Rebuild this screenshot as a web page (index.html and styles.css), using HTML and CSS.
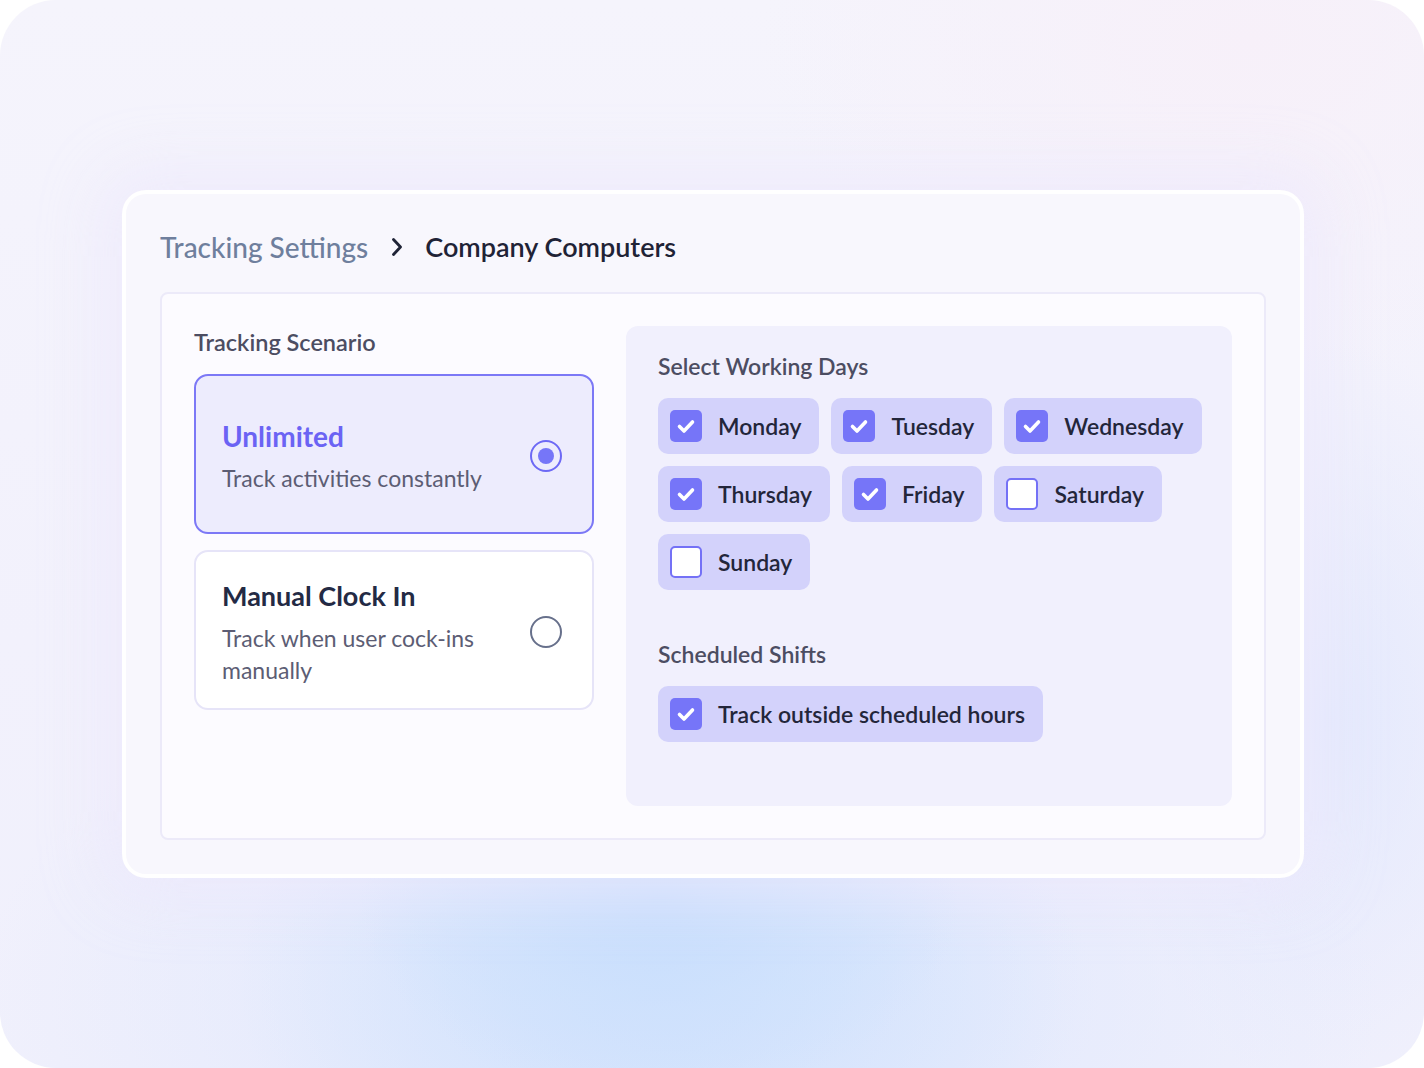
FILE: index.html
```html
<!DOCTYPE html>
<html lang="en">
<head>
<meta charset="utf-8">
<title>Tracking Settings</title>
<link rel="stylesheet" href="styles.css">
</head>
<body>
<div class="frame">
  <section class="card">
    <nav class="crumbs">
      <span class="crumb-parent">Tracking Settings</span>
      <svg class="crumb-sep" width="14" height="20" viewBox="0 0 14 20"><path d="M3.5 2.5 L10.5 10 L3.5 17.5" fill="none" stroke="#1f2336" stroke-width="2.8" stroke-linecap="round" stroke-linejoin="round"/></svg>
      <span class="crumb-current">Company Computers</span>
    </nav>

    <div class="panel">
      <div class="scenario">
        <h3 class="label">Tracking Scenario</h3>
        <label class="option option-active">
          <div class="option-text">
            <div class="option-title">Unlimited</div>
            <div class="option-desc">Track activities constantly</div>
          </div>
          <span class="radio radio-on"></span>
        </label>
        <label class="option">
          <div class="option-text">
            <div class="option-title">Manual Clock In</div>
            <div class="option-desc">Track when user cock-ins manually</div>
          </div>
          <span class="radio"></span>
        </label>
      </div>

      <div class="days">
        <h3 class="label">Select Working Days</h3>
        <div class="chips">
          <span class="chip"><span class="box on"><svg viewBox="0 0 32 32"><path d="M9.5 16.5 L14 21 L22.5 12" /></svg></span>Monday</span>
          <span class="chip"><span class="box on"><svg viewBox="0 0 32 32"><path d="M9.5 16.5 L14 21 L22.5 12" /></svg></span>Tuesday</span>
          <span class="chip"><span class="box on"><svg viewBox="0 0 32 32"><path d="M9.5 16.5 L14 21 L22.5 12" /></svg></span>Wednesday</span>
          <span class="chip"><span class="box on"><svg viewBox="0 0 32 32"><path d="M9.5 16.5 L14 21 L22.5 12" /></svg></span>Thursday</span>
          <span class="chip"><span class="box on"><svg viewBox="0 0 32 32"><path d="M9.5 16.5 L14 21 L22.5 12" /></svg></span>Friday</span>
          <span class="chip"><span class="box"></span>Saturday</span>
          <span class="chip"><span class="box"></span>Sunday</span>
        </div>

        <h3 class="label label-shifts">Scheduled Shifts</h3>
        <div class="chips">
          <span class="chip"><span class="box on"><svg viewBox="0 0 32 32"><path d="M9.5 16.5 L14 21 L22.5 12" /></svg></span>Track outside scheduled hours</span>
        </div>
      </div>
    </div>
  </section>
</div>
</body>
</html>
```

FILE: styles.css
```css
* { box-sizing: border-box; }

html, body {
  margin: 0;
  padding: 0;
  background: #ffffff;
}

body {
  font-family: "Lato", "Noto Sans", sans-serif;
  color: #23263a;
}

/* rounded backdrop with a soft blue glow under the card */
.frame {
  width: 1424px;
  height: 1068px;
  border-radius: 56px;
  overflow: hidden;
  padding: 190px 120px 0 122px;
  background:
    radial-gradient(ellipse 300px 200px at 660px 900px, rgba(200, 222, 253, 1) 0%, rgba(205, 225, 253, 0.6) 55%, rgba(214, 228, 253, 0) 100%),
    radial-gradient(ellipse 420px 300px at 660px 980px, rgba(206, 225, 253, 0.9) 0%, rgba(210, 227, 253, 0.5) 55%, rgba(214, 228, 253, 0) 100%),
    radial-gradient(ellipse 700px 380px at 680px 1000px, rgba(215, 228, 253, 0.9) 0%, rgba(222, 231, 253, 0.5) 55%, rgba(232, 236, 253, 0) 100%),
    radial-gradient(ellipse 220px 380px at 1330px 720px, rgba(226, 232, 253, 0.9) 0%, rgba(226, 232, 253, 0) 100%),
    radial-gradient(ellipse 700px 500px at 1250px 40px, rgba(247, 240, 249, 1) 0%, rgba(247, 240, 249, 0) 70%),
    linear-gradient(180deg, #f5f4fc 0%, #f2f1fc 60%, #f0f0fc 100%);
}

.card {
  width: 1182px;
  height: 688px;
  border: 4px solid rgba(255, 255, 255, 0.95);
  border-radius: 24px;
  background: #f8f7fd;
  padding: 34px;
  box-shadow: 0 0 60px 20px rgba(236, 232, 252, 0.7);
}

.crumbs {
  display: flex;
  align-items: center;
  height: 38px;
  line-height: 38px;
  margin-bottom: 26px;
  font-size: 27px;
  font-weight: 600;
}

.crumb-parent {
  color: #6f7f9d;
  font-size: 28px;
  font-weight: 500;
}

.crumb-sep {
  margin: 0 21px 0 22px;
}

.crumb-current {
  color: #1f2336;
}

.panel {
  display: flex;
  gap: 32px;
  height: 548px;
  padding: 32px;
  border: 2px solid #eceaf9;
  border-radius: 8px;
  background: #fcfbff;
}

.label {
  margin: 0;
  font-size: 23px;
  line-height: 32px;
  font-weight: 600;
  color: #4c4d62;
}

.scenario {
  display: flex;
  flex-direction: column;
  gap: 16px;
  width: 400px;
}

.scenario .label {
  font-size: 23.5px;
}

.option {
  display: flex;
  align-items: center;
  gap: 24px;
  height: 160px;
  padding: 4px 30px 0 26px;
  border: 2px solid #e6e4f8;
  border-radius: 14px;
  background: #ffffff;
}

.option-active {
  border-color: #7c78f6;
  background: #edecfd;
}

.option-text {
  flex: 1;
}

.option-title {
  font-size: 27px;
  line-height: 36px;
  font-weight: 700;
  color: #232a44;
}

.option-active .option-title {
  font-size: 28px;
  color: #6b63f4;
}

.option-desc {
  margin-top: 8px;
  font-size: 23px;
  line-height: 32px;
  color: #5c5d74;
}

.radio {
  flex: none;
  width: 32px;
  height: 32px;
  border-radius: 50%;
  border: 2.5px solid #67708b;
  display: flex;
  align-items: center;
  justify-content: center;
}

.radio-on {
  border-color: #6d69f5;
}

.radio-on::after {
  content: "";
  width: 16px;
  height: 16px;
  border-radius: 50%;
  background: #7676f8;
}

.days {
  flex: 1;
  padding: 24px 20px 24px 32px;
  border-radius: 12px;
  background: #f1f0fd;
}

.days .label {
  margin-bottom: 16px;
}

.days .label-shifts {
  margin-top: 48px;
}

.chips {
  display: flex;
  flex-wrap: wrap;
  gap: 12px;
}

.chip {
  display: inline-flex;
  align-items: center;
  height: 56px;
  padding: 0 18px 0 12px;
  border-radius: 10px;
  background: #d3d2fb;
  font-size: 23px;
  font-weight: 600;
  color: #23263a;
}

.box {
  flex: none;
  width: 32px;
  height: 32px;
  margin-right: 16px;
  border-radius: 5px;
  border: 2.5px solid #7471f6;
  background: #ffffff;
}

.box.on {
  border: none;
  background: #7675f8;
}

.box svg {
  display: block;
  width: 32px;
  height: 32px;
}

.box svg path {
  fill: none;
  stroke: #ffffff;
  stroke-width: 3.6;
  stroke-linecap: round;
  stroke-linejoin: round;
}
```
